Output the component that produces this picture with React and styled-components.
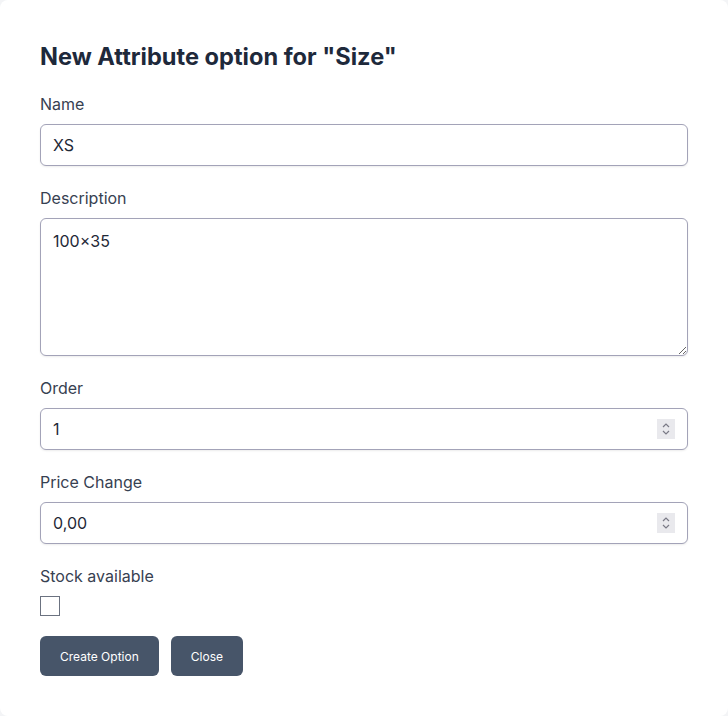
import React, { useState } from 'react';
import styled, { createGlobalStyle } from 'styled-components';

const GlobalStyle = createGlobalStyle`
  html, body {
    margin: 0;
    padding: 0;
    background: #f3f4f6;
  }
  body {
    font-family: Inter, "Noto Sans", sans-serif;
  }
  * {
    box-sizing: border-box;
  }
`;

const Card = styled.form`
  width: 728px;
  min-height: 716px;
  background: #ffffff;
  border-radius: 8px;
  padding: 41px 40px 40px;
  display: flex;
  flex-direction: column;
`;

const Title = styled.h2`
  margin: 0 0 19px;
  font-size: 23.6px;
  line-height: 32px;
  font-weight: 700;
  color: #1e293b;
`;

const Field = styled.div`
  display: flex;
  flex-direction: column;
  gap: 8px;
  margin-bottom: 20px;
`;

const Label = styled.label`
  font-size: 16px;
  line-height: 24px;
  color: #374151;
`;

const InputWrap = styled.div`
  position: relative;
`;

const Input = styled.input`
  width: 100%;
  height: 42px;
  padding: 0 12px;
  border: 1px solid #a3a3b8;
  border-radius: 6px;
  box-shadow: 0 1px 2px rgba(0, 0, 0, 0.08);
  font-family: inherit;
  font-size: 16px;
  color: #1f2937;
  background: #fff;
  outline: none;
`;

const TextArea = styled.textarea`
  display: block;
  width: 100%;
  height: 138px;
  padding: 10px 12px;
  border: 1px solid #a3a3b8;
  border-radius: 6px;
  box-shadow: 0 1px 2px rgba(0, 0, 0, 0.08);
  font-family: inherit;
  font-size: 16px;
  line-height: 24px;
  color: #1f2937;
  background: #fff;
  outline: none;
`;

const Spinner = styled.span`
  position: absolute;
  right: 13px;
  top: 11px;
  width: 18px;
  height: 20px;
  background: #e9e9ed;
  display: flex;
  align-items: center;
  justify-content: center;
`;

const Checkbox = styled.span`
  display: block;
  width: 20px;
  height: 20px;
  border: 1px solid #6b7280;
  background: #fff;
`;

const Buttons = styled.div`
  display: flex;
  gap: 12px;
`;

const Button = styled.button`
  height: 40px;
  padding: 0 20px;
  border: none;
  border-radius: 6px;
  background: #475569;
  color: #ffffff;
  font-family: inherit;
  font-size: 12px;
  cursor: pointer;
`;

const SpinIcon = () => (
  <svg width="10" height="14" viewBox="0 0 10 14" fill="none">
    <path d="M2 5l3-3 3 3" stroke="#7a7a86" strokeWidth="1.2" />
    <path d="M2 9l3 3 3-3" stroke="#7a7a86" strokeWidth="1.2" />
  </svg>
);

const NumberField = ({ label, value, onChange }) => (
  <Field>
    <Label>{label}</Label>
    <InputWrap>
      <Input value={value} onChange={(e) => onChange(e.target.value)} />
      <Spinner>
        <SpinIcon />
      </Spinner>
    </InputWrap>
  </Field>
);

export default function App() {
  const [name, setName] = useState('XS');
  const [description, setDescription] = useState('100×35');
  const [order, setOrder] = useState('1');
  const [price, setPrice] = useState('0,00');

  return (
    <>
      <GlobalStyle />
      <Card onSubmit={(e) => e.preventDefault()}>
        <Title>New Attribute option for "Size"</Title>
        <Field>
          <Label>Name</Label>
          <Input value={name} onChange={(e) => setName(e.target.value)} />
        </Field>
        <Field>
          <Label>Description</Label>
          <TextArea value={description} onChange={(e) => setDescription(e.target.value)} />
        </Field>
        <NumberField label="Order" value={order} onChange={setOrder} />
        <NumberField label="Price Change" value={price} onChange={setPrice} />
        <Field>
          <Label>Stock available</Label>
          <Checkbox />
        </Field>
        <Buttons>
          <Button type="submit">Create Option</Button>
          <Button type="button">Close</Button>
        </Buttons>
      </Card>
    </>
  );
}
